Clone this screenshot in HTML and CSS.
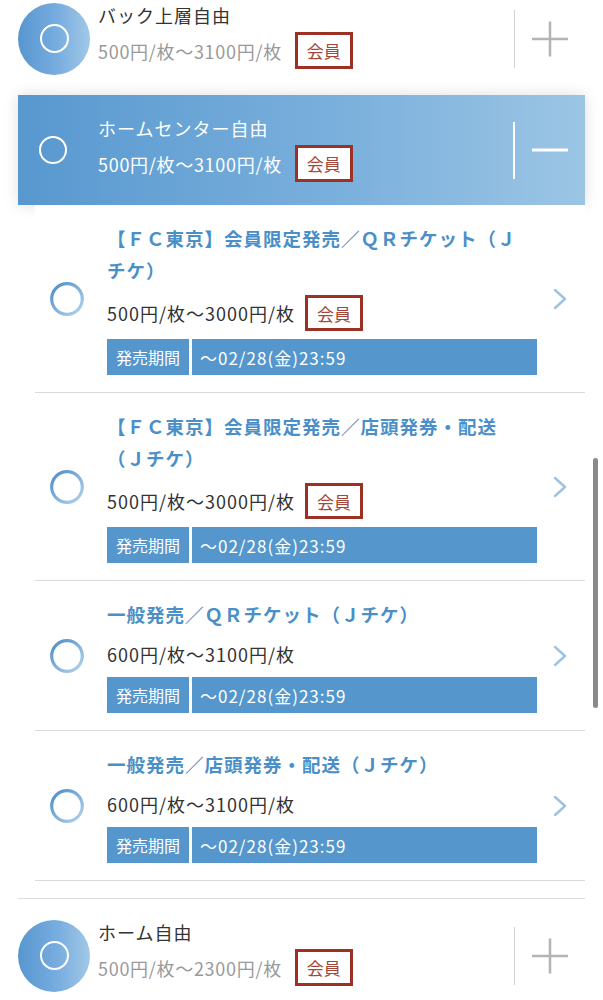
FILE: index.html
```html
<!DOCTYPE html>
<html lang="ja">
<head>
<meta charset="utf-8">
<title>席種選択</title>
<link rel="stylesheet" href="styles.css">
</head>
<body>
<div class="page">
  <div class="seat">
    <div class="seat-icon"><span class="disc"></span></div>
    <div class="seat-body">
      <div class="seat-name">バック上層自由</div>
      <div class="seat-price"><span>500円/枚～3100円/枚</span><span class="badge">会員</span></div>
    </div>
    <div class="seat-toggle">
      <svg width="36" height="36" viewBox="0 0 36 36"><path d="M0 18H36M18 0.5V35.5" stroke="#b4b4b4" stroke-width="2.5" fill="none"/></svg>
    </div>
  </div>

  <div class="group">
    <div class="seat seat-open">
      <div class="seat-icon"><span class="ring"></span></div>
      <div class="seat-body">
        <div class="seat-name">ホームセンター自由</div>
        <div class="seat-price"><span>500円/枚～3100円/枚</span><span class="badge">会員</span></div>
      </div>
      <div class="seat-toggle">
        <svg width="36" height="36" viewBox="0 0 36 36"><path d="M0 18H36" stroke="#ffffff" stroke-width="3" fill="none"/></svg>
      </div>
    </div>

    <div class="panel">
      <div class="item">
        <div class="item-radio">
          <svg width="34" height="34" viewBox="0 0 34 34"><defs><linearGradient id="rg1" x1="0" y1="0" x2="1" y2="1"><stop offset="0" stop-color="#4d8dc7"/><stop offset="1" stop-color="#b3d4ec"/></linearGradient></defs><circle cx="17" cy="17" r="15.3" fill="none" stroke="url(#rg1)" stroke-width="3.2"/></svg>
        </div>
        <div class="item-body">
          <div class="item-title">【ＦＣ東京】会員限定発売／ＱＲチケット（Ｊチケ）</div>
          <div class="item-price"><span>500円/枚～3000円/枚</span><span class="badge">会員</span></div>
          <div class="period"><span class="period-label">発売期間</span><span class="period-value">～02/28(金)23:59</span></div>
        </div>
        <div class="item-arrow">
          <svg width="14" height="22" viewBox="0 0 14 22"><polyline points="2,2 12,11 2,20" fill="none" stroke="#9dc3e1" stroke-width="2.4" stroke-linecap="round" stroke-linejoin="round"/></svg>
        </div>
      </div>

      <div class="item">
        <div class="item-radio">
          <svg width="34" height="34" viewBox="0 0 34 34"><defs><linearGradient id="rg2" x1="0" y1="0" x2="1" y2="1"><stop offset="0" stop-color="#4d8dc7"/><stop offset="1" stop-color="#b3d4ec"/></linearGradient></defs><circle cx="17" cy="17" r="15.3" fill="none" stroke="url(#rg2)" stroke-width="3.2"/></svg>
        </div>
        <div class="item-body">
          <div class="item-title">【ＦＣ東京】会員限定発売／店頭発券・配送（Ｊチケ）</div>
          <div class="item-price"><span>500円/枚～3000円/枚</span><span class="badge">会員</span></div>
          <div class="period"><span class="period-label">発売期間</span><span class="period-value">～02/28(金)23:59</span></div>
        </div>
        <div class="item-arrow">
          <svg width="14" height="22" viewBox="0 0 14 22"><polyline points="2,2 12,11 2,20" fill="none" stroke="#9dc3e1" stroke-width="2.4" stroke-linecap="round" stroke-linejoin="round"/></svg>
        </div>
      </div>

      <div class="item">
        <div class="item-radio">
          <svg width="34" height="34" viewBox="0 0 34 34"><defs><linearGradient id="rg3" x1="0" y1="0" x2="1" y2="1"><stop offset="0" stop-color="#4d8dc7"/><stop offset="1" stop-color="#b3d4ec"/></linearGradient></defs><circle cx="17" cy="17" r="15.3" fill="none" stroke="url(#rg3)" stroke-width="3.2"/></svg>
        </div>
        <div class="item-body">
          <div class="item-title">一般発売／ＱＲチケット（Ｊチケ）</div>
          <div class="item-price"><span>600円/枚～3100円/枚</span></div>
          <div class="period"><span class="period-label">発売期間</span><span class="period-value">～02/28(金)23:59</span></div>
        </div>
        <div class="item-arrow">
          <svg width="14" height="22" viewBox="0 0 14 22"><polyline points="2,2 12,11 2,20" fill="none" stroke="#9dc3e1" stroke-width="2.4" stroke-linecap="round" stroke-linejoin="round"/></svg>
        </div>
      </div>

      <div class="item">
        <div class="item-radio">
          <svg width="34" height="34" viewBox="0 0 34 34"><defs><linearGradient id="rg4" x1="0" y1="0" x2="1" y2="1"><stop offset="0" stop-color="#4d8dc7"/><stop offset="1" stop-color="#b3d4ec"/></linearGradient></defs><circle cx="17" cy="17" r="15.3" fill="none" stroke="url(#rg4)" stroke-width="3.2"/></svg>
        </div>
        <div class="item-body">
          <div class="item-title">一般発売／店頭発券・配送（Ｊチケ）</div>
          <div class="item-price"><span>600円/枚～3100円/枚</span></div>
          <div class="period"><span class="period-label">発売期間</span><span class="period-value">～02/28(金)23:59</span></div>
        </div>
        <div class="item-arrow">
          <svg width="14" height="22" viewBox="0 0 14 22"><polyline points="2,2 12,11 2,20" fill="none" stroke="#9dc3e1" stroke-width="2.4" stroke-linecap="round" stroke-linejoin="round"/></svg>
        </div>
      </div>
    </div>
  </div>

  <div class="seat">
    <div class="seat-icon"><span class="disc"></span></div>
    <div class="seat-body">
      <div class="seat-name">ホーム自由</div>
      <div class="seat-price"><span>500円/枚～2300円/枚</span><span class="badge">会員</span></div>
    </div>
    <div class="seat-toggle">
      <svg width="36" height="36" viewBox="0 0 36 36"><path d="M0 18H36M18 0.5V35.5" stroke="#b4b4b4" stroke-width="2.5" fill="none"/></svg>
    </div>
  </div>
</div>
<div class="scrollbar"></div>
</body>
</html>
```
FILE: styles.css
```css
html, body {
  margin: 0;
  padding: 0;
  background: #ffffff;
}

body {
  font-family: "Noto Sans CJK JP", "Noto Sans", sans-serif;
  color: #333333;
  overflow: hidden;
}

.page {
  margin-top: -18px;
  padding: 0 18px;
}

/* seat rows */
.seat {
  display: flex;
  height: 113px;
}

.seat-icon {
  width: 72px;
  flex-shrink: 0;
  display: flex;
  align-items: center;
  justify-content: center;
}

.disc {
  width: 72px;
  height: 72px;
  border-radius: 50%;
  background: linear-gradient(90deg, #5796cf 0%, #78ade0 55%, #a1c8e6 100%);
  display: flex;
  align-items: center;
  justify-content: center;
}

.disc::after {
  content: "";
  width: 25px;
  height: 25px;
  border: 2px solid #ffffff;
  border-radius: 50%;
}

.ring {
  width: 24px;
  height: 24px;
  border: 2.5px solid #ffffff;
  border-radius: 50%;
  margin-right: 2px;
}

.seat-body {
  flex: 1;
  padding: 21px 0 0 8px;
}

.seat-name {
  font-size: 18px;
  letter-spacing: 1px;
  line-height: 24px;
  color: #333333;
}

.seat-price {
  display: flex;
  align-items: center;
  gap: 13px;
  margin-top: 5px;
  font-size: 18px;
  letter-spacing: 0.7px;
  color: #9a9a9a;
}

.badge {
  width: 58px;
  height: 37px;
  box-sizing: border-box;
  border: 3px solid #9b3224;
  background: #ffffff;
  color: #a3473a;
  font-size: 17px;
  letter-spacing: 0;
  display: flex;
  align-items: center;
  justify-content: center;
  flex-shrink: 0;
}

.seat-toggle {
  width: 70px;
  height: 58px;
  align-self: center;
  border-left: 1px solid #d2d2d2;
  display: flex;
  align-items: center;
  justify-content: center;
}

/* opened seat */
.group {
  border-bottom: 1px solid #dcdcdc;
  padding-bottom: 17px;
}

.seat-open {
  height: 110px;
  background: linear-gradient(90deg, #5898cf 0%, #79afdc 55%, #9cc5e4 100%);
  box-shadow: 0 0 14px rgba(0, 0, 0, 0.13);
}

.seat-open .seat-name,
.seat-open .seat-price {
  color: #ffffff;
}

.seat-open .seat-toggle {
  border-left: 2px solid #ffffff;
  height: 57px;
}

/* sub items */
.panel {
  margin-left: 17px;
  background: #ffffff;
}

.item {
  display: flex;
  padding: 17px 0;
  border-bottom: 1px solid #dadada;
}

.item-radio {
  width: 72px;
  flex-shrink: 0;
  box-sizing: border-box;
  padding-left: 15px;
  display: flex;
  align-items: center;
}

.item-body {
  width: 430px;
  flex-shrink: 0;
}

.item-title {
  font-size: 18.5px;
  letter-spacing: 1px;
  line-height: 32px;
  font-weight: bold;
  color: #4a8fc7;
  padding-right: 12px;
}

.item-price {
  display: flex;
  align-items: center;
  gap: 10px;
  min-height: 30px;
  margin: 9px 0 8px;
  font-size: 18px;
  letter-spacing: 1px;
  color: #333333;
}

.item-price .badge {
  height: 36px;
}

.period {
  display: flex;
  gap: 3px;
  height: 36px;
}

.period-label,
.period-value {
  background: #5597cc;
  color: #ffffff;
  display: flex;
  align-items: center;
}

.period-label {
  width: 82px;
  box-sizing: border-box;
  justify-content: center;
  font-size: 16px;
}

.period-value {
  flex: 1;
  padding-left: 8px;
  font-size: 17px;
  letter-spacing: 1px;
}

.item-arrow {
  flex: 1;
  display: flex;
  align-items: center;
  padding-left: 16px;
}

.scrollbar {
  position: fixed;
  left: 593px;
  top: 458px;
  width: 5px;
  height: 250px;
  border-radius: 3px;
  background: #8a8a8a;
}
```
